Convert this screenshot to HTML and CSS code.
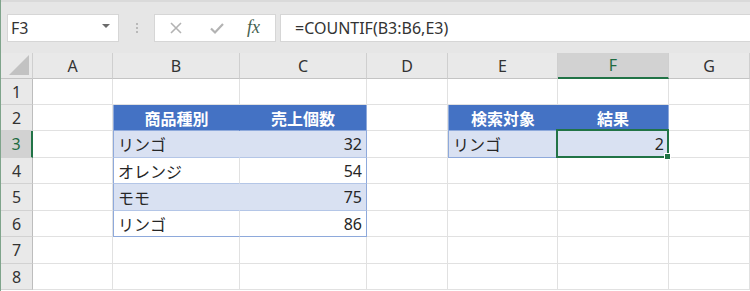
FILE: index.html
```html
<!DOCTYPE html>
<html>
<head>
  <title>COUNTIF</title>
  <link rel="stylesheet" href="styles.css">
</head>
<body>
  <div class="app">
    <div class="toolbar">
      <div class="namebox">
        <span>F3</span>
        <span class="caret"></span>
      </div>
      <div class="grip"><i></i><i></i><i></i></div>
      <div class="fx-tools">
        <svg width="14" height="14" viewBox="0 0 14 14"><path d="M2 2 L12 12 M12 2 L2 12" stroke="#b3b3b3" stroke-width="1.6" fill="none"/></svg>
        <svg width="16" height="14" viewBox="0 0 16 14"><path d="M2 7.5 L6 11.5 L14 3" stroke="#b3b3b3" stroke-width="2.2" fill="none"/></svg>
        <span class="fx">fx</span>
      </div>
      <div class="formula">=COUNTIF(B3:B6,E3)</div>
    </div>

    <div class="sheet">
      <!-- header row -->
      <div class="corner"><span class="tri"></span></div>
      <div class="colh">A</div>
      <div class="colh">B</div>
      <div class="colh">C</div>
      <div class="colh">D</div>
      <div class="colh">E</div>
      <div class="colh sel">F</div>
      <div class="colh">G</div>

      <!-- row 1 -->
      <div class="rowh">1</div>
      <div class="c"></div><div class="c"></div><div class="c"></div><div class="c"></div><div class="c"></div><div class="c"></div><div class="c"></div>

      <!-- row 2 -->
      <div class="rowh">2</div>
      <div class="c"></div>
      <div class="c th tl">商品種別</div>
      <div class="c th tr">売上個数</div>
      <div class="c"></div>
      <div class="c th tl">検索対象</div>
      <div class="c th tr">結果</div>
      <div class="c"></div>

      <!-- row 3 -->
      <div class="rowh sel">3</div>
      <div class="c"></div>
      <div class="c band tl">リンゴ</div>
      <div class="c band tr num">32</div>
      <div class="c"></div>
      <div class="c band tl last">リンゴ</div>
      <div class="c band tr num last active">2<span class="handle"></span></div>
      <div class="c"></div>

      <!-- row 4 -->
      <div class="rowh">4</div>
      <div class="c"></div>
      <div class="c plain tl">オレンジ</div>
      <div class="c plain tr num">54</div>
      <div class="c"></div><div class="c"></div><div class="c"></div><div class="c"></div>

      <!-- row 5 -->
      <div class="rowh">5</div>
      <div class="c"></div>
      <div class="c band tl">モモ</div>
      <div class="c band tr num">75</div>
      <div class="c"></div><div class="c"></div><div class="c"></div><div class="c"></div>

      <!-- row 6 -->
      <div class="rowh">6</div>
      <div class="c"></div>
      <div class="c plain tl last">リンゴ</div>
      <div class="c plain tr num last">86</div>
      <div class="c"></div><div class="c"></div><div class="c"></div><div class="c"></div>

      <!-- row 7 -->
      <div class="rowh">7</div>
      <div class="c"></div><div class="c"></div><div class="c"></div><div class="c"></div><div class="c"></div><div class="c"></div><div class="c"></div>

      <!-- row 8 -->
      <div class="rowh">8</div>
      <div class="c"></div><div class="c"></div><div class="c"></div><div class="c"></div><div class="c"></div><div class="c"></div><div class="c"></div>
    </div>
  </div>
</body>
</html>
```

FILE: styles.css
```css
html, body {
  margin: 0;
  padding: 0;
  background: #ffffff;
}
body {
  width: 750px;
  height: 291px;
  overflow: hidden;
  font-family: "Noto Sans", "Noto Sans CJK JP", sans-serif;
  color: #262626;
}
.app {
  border-left: 1px solid #7fa48b;
  height: 291px;
  box-sizing: border-box;
}

/* formula bar area */
.toolbar {
  height: 53px;
  background: #e6e6e6;
  display: flex;
  align-items: center;
  padding-left: 6px;
  box-sizing: border-box;
  border-top: 2px solid #dadada;
}
.namebox {
  width: 112px;
  height: 28px;
  background: #fff;
  border: 1px solid #d6d6d6;
  box-sizing: border-box;
  display: flex;
  align-items: center;
  justify-content: space-between;
  padding: 0 8px 0 3px;
  font-size: 16px;
  color: #333;
}
.caret {
  width: 0;
  height: 0;
  border-left: 4px solid transparent;
  border-right: 4px solid transparent;
  border-top: 4px solid #6b6b6b;
  margin-top: -4px;
}
.grip {
  width: 35px;
  display: flex;
  flex-direction: column;
  align-items: center;
  gap: 2px;
}
.grip i {
  display: block;
  width: 2px;
  height: 2px;
  background: #b9b9b9;
}
.fx-tools {
  width: 122px;
  height: 28px;
  background: #fff;
  border: 1px solid #d6d6d6;
  box-sizing: border-box;
  display: flex;
  align-items: center;
  padding-left: 14px;
  gap: 26px;
}
.fx {
  font-family: "Liberation Serif", serif;
  font-style: italic;
  font-size: 18px;
  color: #45614f;
  margin-left: -4px;
}
.formula {
  margin-left: 4px;
  flex: 1;
  height: 28px;
  background: #fff;
  border: 1px solid #d6d6d6;
  border-right: none;
  box-sizing: border-box;
  display: flex;
  align-items: center;
  padding-left: 14px;
  font-size: 16px;
  color: #333;
}

/* sheet grid */
.sheet {
  display: grid;
  grid-template-columns: 32px 80px 127px 127px 81px 110px 111px 81px;
  grid-template-rows: 26px 26px 26px 27px 26px 27px 26px 27px 26px;
}
.corner, .colh, .rowh {
  background: #e9e9e9;
  box-sizing: border-box;
  border-right: 1px solid #cfcfcf;
  border-bottom: 1px solid #c4c4c4;
  font-size: 16px;
  color: #333;
  display: flex;
  align-items: center;
  justify-content: center;
}
.rowh {
  border-bottom: 1px solid #d2d2d2;
  border-right: 1px solid #bdbdbd;
}
.corner {
  position: relative;
}
.tri {
  position: absolute;
  right: 3px;
  bottom: 3px;
  width: 0;
  height: 0;
  border-left: 20px solid transparent;
  border-bottom: 20px solid #c2c2c2;
}
.colh.sel {
  background: #d2d2d2;
  border-bottom: 2px solid #217346;
  color: #1e6b41;
}
.rowh.sel {
  background: #d2d2d2;
  border-right: 2px solid #217346;
  color: #1e6b41;
}
.c {
  box-sizing: border-box;
  border-right: 1px solid #e1e1e1;
  border-bottom: 1px solid #e1e1e1;
  font-family: "Noto Sans CJK JP", sans-serif;
  font-size: 16px;
  display: flex;
  align-items: center;
  padding: 0 4px;
  white-space: nowrap;
}
.th {
  background: #4472c4;
  color: #fff;
  font-weight: bold;
  justify-content: center;
  border-right-color: #4472c4;
  border-bottom-color: #8ea9db;
}
.band {
  background: #d9e1f2;
  border-right-color: #d9e1f2;
  border-bottom-color: #b4c6e7;
}
.plain {
  border-bottom-color: #b4c6e7;
}
.tl {
  border-left: 1px solid #8ea9db;
}
.tr {
  border-right: 1px solid #8ea9db;
}
.num {
  justify-content: flex-end;
  font-family: "Noto Sans", sans-serif;
}
.last {
  border-bottom-color: #8ea9db;
}
.active {
  position: relative;
}
.active::after {
  content: "";
  position: absolute;
  top: -2px;
  left: -2px;
  right: -1px;
  bottom: -1px;
  border: 2px solid #217346;
}
.handle {
  position: absolute;
  right: -3px;
  bottom: -3px;
  width: 5px;
  height: 5px;
  background: #217346;
  border: 1px solid #fff;
  z-index: 1;
}
```
